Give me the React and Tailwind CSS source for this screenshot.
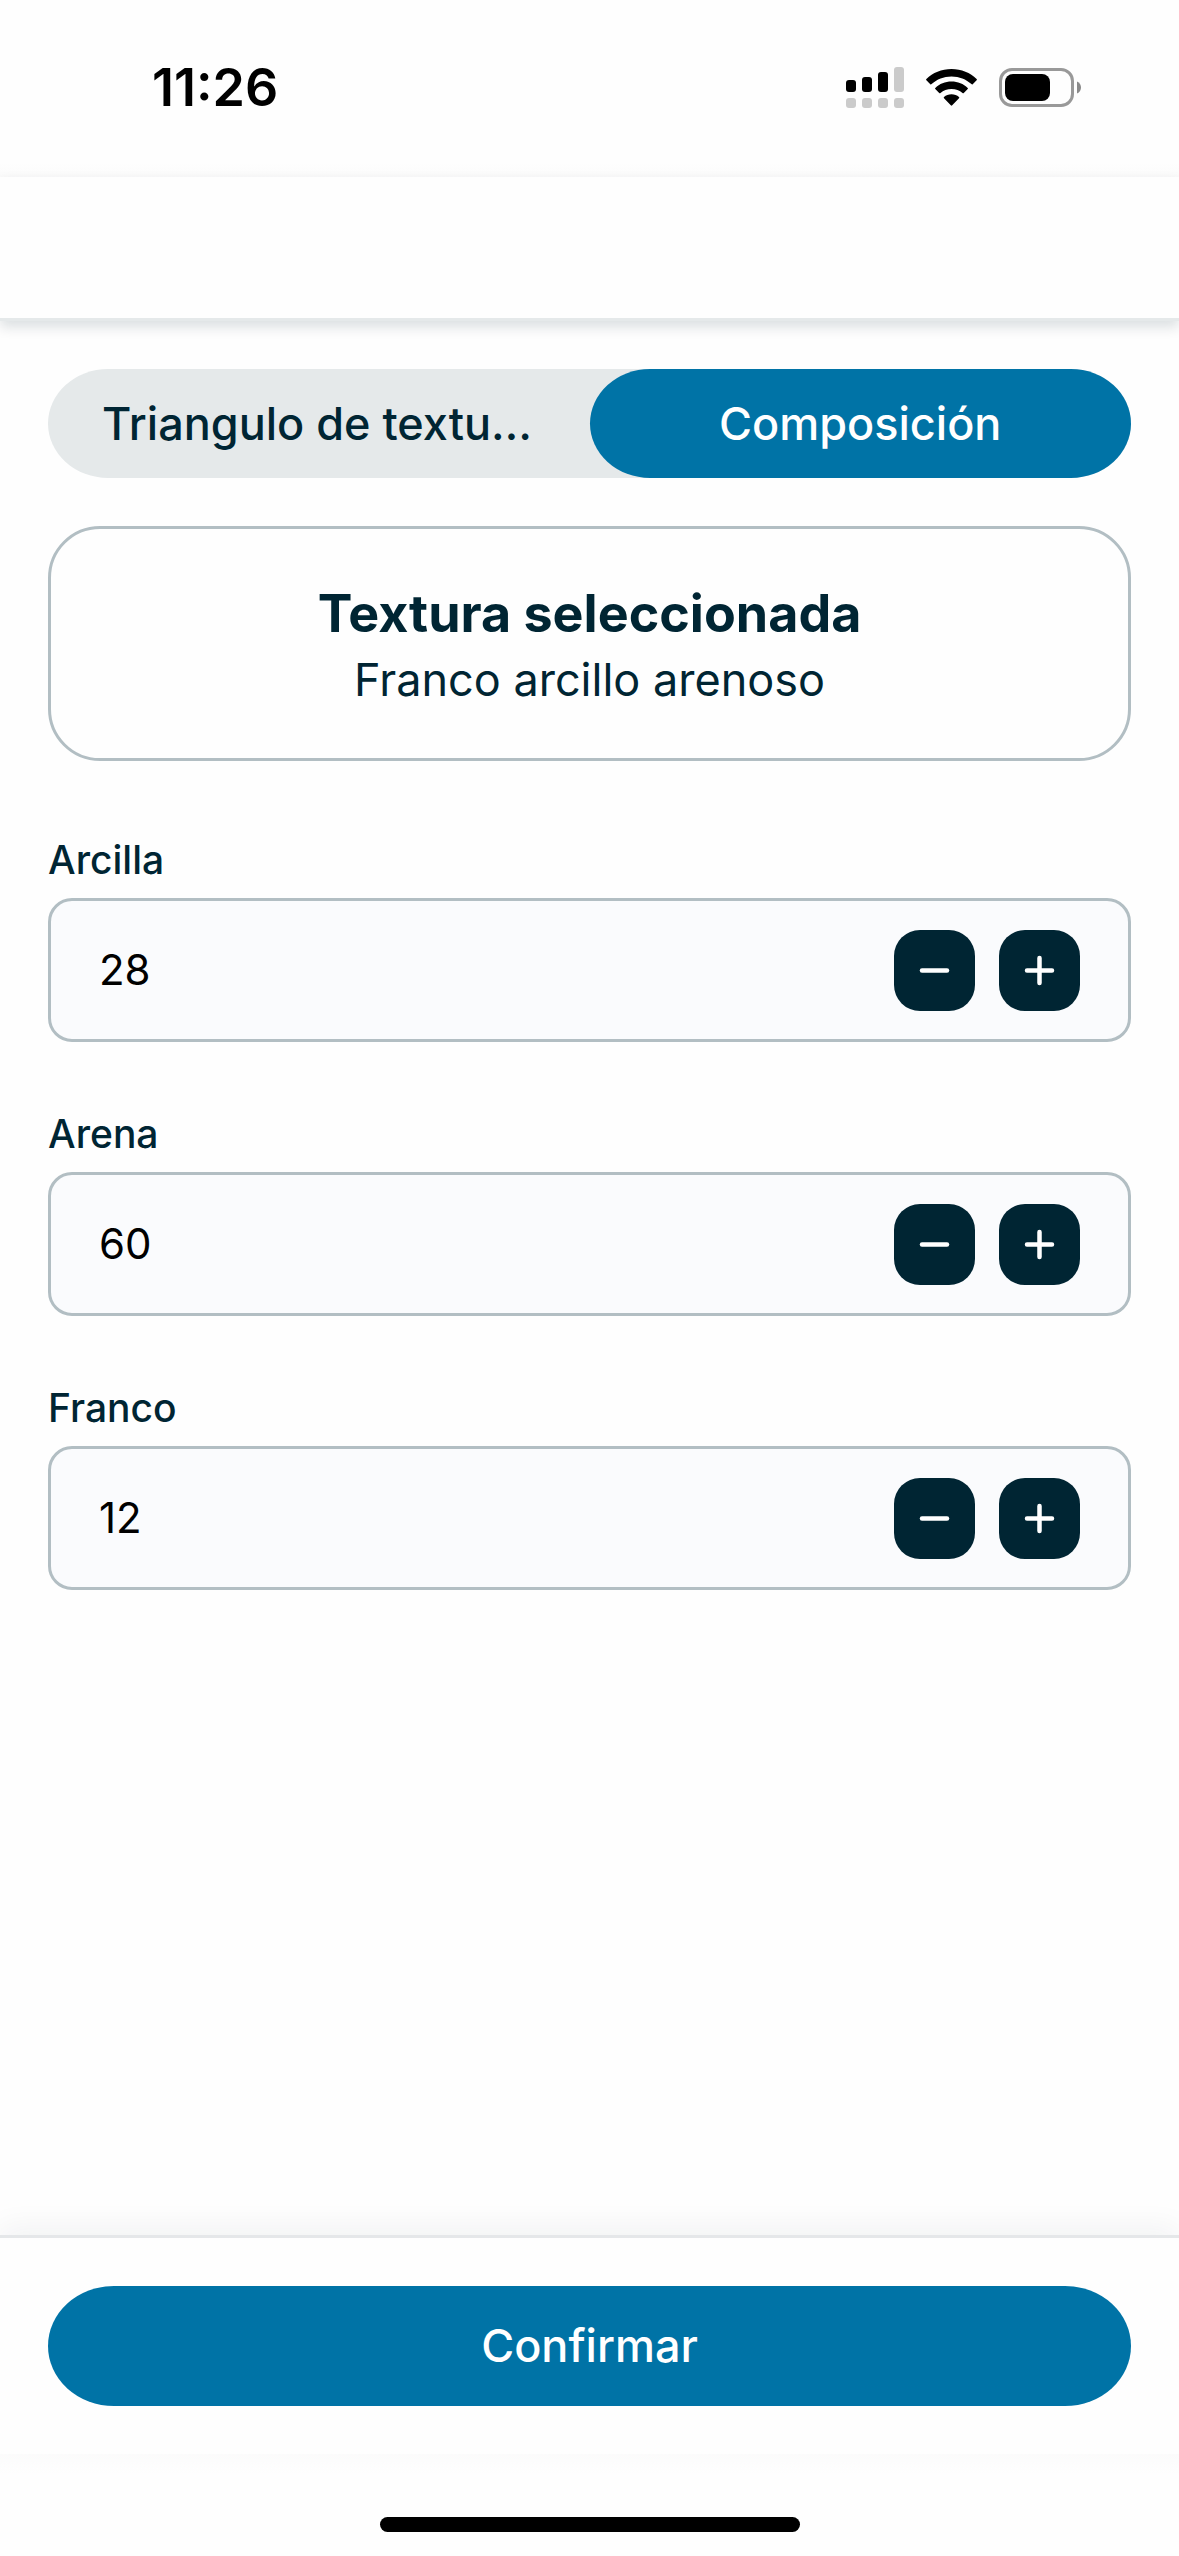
import React, { useState } from "react";

const FIELDS = [
  { id: "arcilla", label: "Arcilla", initial: 28 },
  { id: "arena", label: "Arena", initial: 60 },
  { id: "franco", label: "Franco", initial: 12 },
];

const TABS = [
  { id: "triangle", label: "Triangulo de texturas" },
  { id: "composition", label: "Composición" },
];

export default function App() {
  const [tab, setTab] = useState("composition");
  const [values, setValues] = useState(() => Object.fromEntries(FIELDS.map((f) => [f.id, f.initial])));

  function update(id, next) {
    const n = Number(next);
    if (Number.isNaN(n)) return;
    setValues((v) => ({ ...v, [id]: Math.max(0, Math.min(100, n)) }));
  }

  return (
    <div className="flex min-h-screen flex-col bg-[#fefefe] font-['Inter',sans-serif] text-[#002533]">
      <StatusBar />
      <header className="relative h-[144px] border-b-3 border-[#e5e9ea] shadow-[0_6px_12px_rgba(0,37,51,0.14)]" />

      <main className="flex flex-1 flex-col px-12 pt-12">
        <div role="tablist" className="grid grid-cols-2 rounded-[60px/50%] bg-[#e5e9ea]">
          {TABS.map((t) => (
            <button
              key={t.id}
              role="tab"
              aria-selected={tab === t.id}
              onClick={() => setTab(t.id)}
              className={`h-[109px] min-w-0 truncate rounded-[60px/50%] px-[54px] text-[45px] leading-[64px] font-medium ${
                tab === t.id ? "bg-[#0073a6] text-white" : "text-[#002533]"
              }`}
            >
              {t.label}
            </button>
          ))}
        </div>

        <section className="mt-12 rounded-[52px] border-3 border-[#b2bec3] pt-[53px] pb-[44px] text-center">
          <h1 className="text-[52px] leading-[64px] font-bold">Textura seleccionada</h1>
          <p className="text-[45px] leading-[68px]">Franco arcillo arenoso</p>
        </section>

        <div className="mt-[75px] flex flex-col gap-[68px]">
          {FIELDS.map((f) => (
            <Stepper key={f.id} {...f} value={values[f.id]} onChange={(n) => update(f.id, n)} />
          ))}
        </div>
      </main>

      <footer className="border-t-3 border-[#e5e7e9] px-12 py-12 shadow-[0_-6px_30px_rgba(0,37,51,0.06)]">
        <button className="h-[120px] w-full rounded-[66px/50%] bg-[#0073a6] text-[45px] leading-[64px] font-medium text-white">
          Confirmar
        </button>
      </footer>
      <div className="relative flex h-[102px] items-end justify-center bg-linear-to-b from-[#fbfbfb] to-[#fefefe] to-20% pb-6">
        <div className="h-[15px] w-[420px] rounded-full bg-black" />
      </div>
    </div>
  );
}

function Stepper({ id, label, value, onChange }) {
  return (
    <div className="flex flex-col gap-[14px]">
      <label htmlFor={id} className="text-[39px] leading-[48px] font-medium">
        {label}
      </label>
      <div className="flex h-[144px] items-center gap-6 rounded-3xl border-3 border-[#b2bec3] bg-[#fafbfd] px-12">
        <input
          id={id}
          type="text"
          inputMode="numeric"
          value={value}
          onChange={(e) => onChange(e.target.value)}
          className="min-w-0 flex-1 bg-transparent text-[42px] leading-[64px] text-black outline-none"
        />
        <StepButton label={`Restar ${label}`} onClick={() => onChange(value - 1)} path="M28 40.5H53" />
        <StepButton label={`Sumar ${label}`} onClick={() => onChange(value + 1)} path="M28 40.5H53M40.5 28V53" />
      </div>
    </div>
  );
}

function StepButton({ label, onClick, path }) {
  return (
    <button aria-label={label} onClick={onClick} className="size-[81px] shrink-0 rounded-[26px] bg-[#002533]">
      <svg viewBox="0 0 81 81" className="size-full" fill="none" stroke="white" strokeWidth="4.5" strokeLinecap="round">
        <path d={path} />
      </svg>
    </button>
  );
}

function StatusBar() {
  return (
    <div className="flex h-[177px] items-center justify-between bg-linear-to-b from-[#fefefe] from-92% to-[#fbfbfb] pr-[97px] pb-[2px] pl-[152px]">
      <span className="text-[52px] leading-[64px] font-semibold text-black">11:26</span>
      <div className="flex items-center gap-[22px]">
        <svg viewBox="0 0 58 41" className="h-[41px] w-[58px]">
          <rect x="0" y="13" width="10" height="12" rx="3" />
          <rect x="16" y="10" width="10" height="15" rx="3" />
          <rect x="32" y="5" width="10" height="20" rx="3" />
          <g fill="#cbcbcb">
            <rect x="48" y="0" width="10" height="25" rx="3" />
            <rect x="0" y="31" width="10" height="10" rx="3" />
            <rect x="16" y="31" width="10" height="10" rx="3" />
            <rect x="32" y="31" width="10" height="10" rx="3" />
            <rect x="48" y="31" width="10" height="10" rx="3" />
          </g>
        </svg>
        <svg viewBox="0 0 51 41" className="h-[41px] w-[51px]">
          <path d="M25.500 2C35.500 2 44.200 5.800 50.600 12Q51.200 12.700 50.600 13.300L46.700 17.200Q46.100 17.700 45.400 17.100C40.200 12.200 33.300 9.400 25.500 9.400S10.800 12.200 5.600 17.100Q4.900 17.700 4.300 17.200L.400 13.300Q-.200 12.700 .400 12C6.800 5.800 15.500 2 25.500 2Z" />
          <path d="M25.500 14.600C31.800 14.600 37.500 17 41.700 20.900Q42.300 21.500 41.700 22.100L37.800 26Q37.200 26.600 36.500 26C33.600 23.500 29.800 22 25.500 22S17.400 23.500 14.500 26Q13.800 26.600 13.200 26L9.300 22.100Q8.700 21.500 9.300 20.900C13.500 17 19.200 14.600 25.500 14.600Z" />
          <path d="M25.500 27.300C28.400 27.300 31 28.300 33 30Q33.600 30.600 33 31.200L26.200 38.300Q25.500 39 24.800 38.300L18 31.200Q17.400 30.600 18 30C20 28.300 22.600 27.300 25.500 27.300Z" />
        </svg>
        <svg viewBox="0 0 83 41" className="h-[41px] w-[83px]">
          <rect x="1.500" y="2.500" width="72" height="36" rx="11.500" fill="none" stroke="#999" strokeWidth="3" />
          <rect x="6" y="7" width="45" height="27" rx="8" />
          <path d="M78 14.500C80.800 15.700 82 18 82 20.500S80.800 25.300 78 26.500Z" fill="#8a8a8a" />
        </svg>
      </div>
    </div>
  );
}
